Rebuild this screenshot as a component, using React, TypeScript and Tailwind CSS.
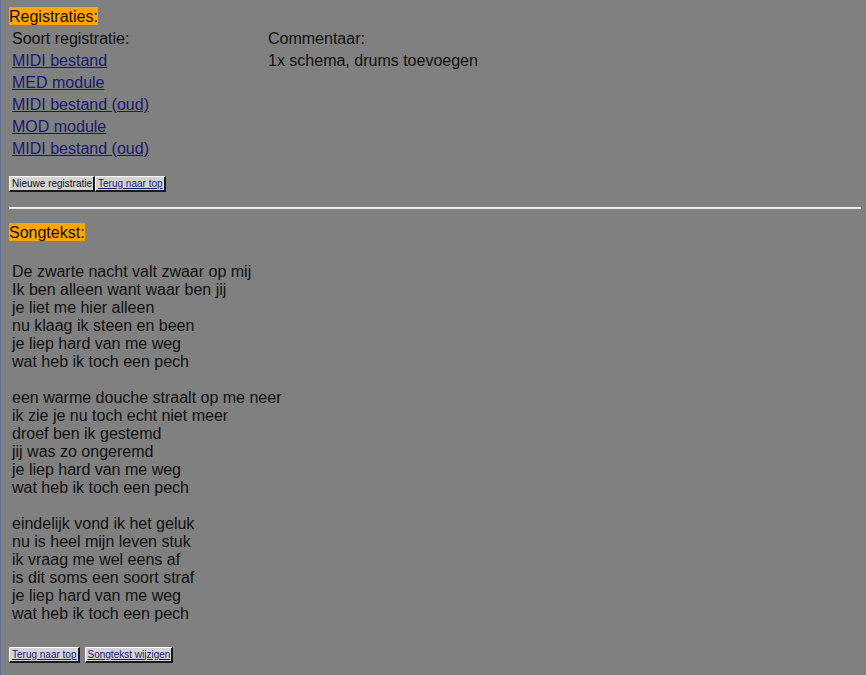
import React from "react";

const font = { fontFamily: '"Liberation Sans", Arial, sans-serif' };

function Btn({ children, link }: { children: React.ReactNode; link?: boolean }) {
  return (
    <span
      className={
        "inline-flex items-center h-[16px] pl-[2px] pr-[1px] bg-[#d4d4d4] border-t border-l border-t-white border-l-white border-r-2 border-b-2 border-r-[#1a1a1a] border-b-[#1a1a1a] text-[10px] leading-[12px] " +
        (link ? "text-[#191970] underline" : "text-[#111]")
      }
    >
      {children}
    </span>
  );
}

const stanzas = [
  [
    "De zwarte nacht valt zwaar op mij",
    "Ik ben alleen want waar ben jij",
    "je liet me hier alleen",
    "nu klaag ik steen en been",
    "je liep hard van me weg",
    "wat heb ik toch een pech",
  ],
  [
    "een warme douche straalt op me neer",
    "ik zie je nu toch echt niet meer",
    "droef ben ik gestemd",
    "jij was zo ongeremd",
    "je liep hard van me weg",
    "wat heb ik toch een pech",
  ],
  [
    "eindelijk vond ik het geluk",
    "nu is heel mijn leven stuk",
    "ik vraag me wel eens af",
    "is dit soms een soort straf",
    "je liep hard van me weg",
    "wat heb ik toch een pech",
  ],
];

const regs = ["MIDI bestand", "MED module", "MIDI bestand (oud)", "MOD module", "MIDI bestand (oud)"];

export default function App() {
  return (
    <div
      className="min-h-screen bg-[#808080] border-l border-l-[#5f7098] pl-[8px] pr-[5px] pt-[8px] pb-[8px] text-[16px] leading-[18px] text-[#111]"
      style={font}
    >
      <div className="h-[18px]">
        <span className="bg-[#ffa500] pt-[1px]">Registraties:</span>
      </div>
      <div className="pt-[3px] pl-[2px] flex flex-col gap-[2px]">
        <div className="flex gap-[2px]">
          <div className="w-[254px] p-[1px]">Soort registratie:</div>
          <div className="p-[1px]">Commentaar:</div>
        </div>
        {regs.map((r, i) => (
          <div key={i} className="flex gap-[2px]">
            <div className="w-[254px] p-[1px]">
              <a className="text-[#191970] underline">{r}</a>
            </div>
            <div className="p-[1px]">{i === 0 ? "1x schema, drums toevoegen" : ""}</div>
          </div>
        ))}
      </div>
      <div className="mt-[17px] flex">
        <Btn>Nieuwe registratie</Btn>
        <Btn link>Terug naar top</Btn>
      </div>
      <div className="mt-[15px] h-[2px] bg-[#e6e6e6] border-t border-t-[#f0f0f0]" />
      <div className="mt-[15px] h-[18px]">
        <span className="bg-[#ffa500] pt-[1px]">Songtekst:</span>
      </div>
      <div className="mt-[21px] pl-[3px]">
        {stanzas.map((s, i) => (
          <div key={i} className={i > 0 ? "mt-[18px]" : ""}>
            {s.map((l, j) => (
              <div key={j}>{l}</div>
            ))}
          </div>
        ))}
      </div>
      <div className="mt-[24px] flex gap-[5px]">
        <Btn link>Terug naar top</Btn>
        <Btn link>Songtekst wijzigen</Btn>
      </div>
    </div>
  );
}
